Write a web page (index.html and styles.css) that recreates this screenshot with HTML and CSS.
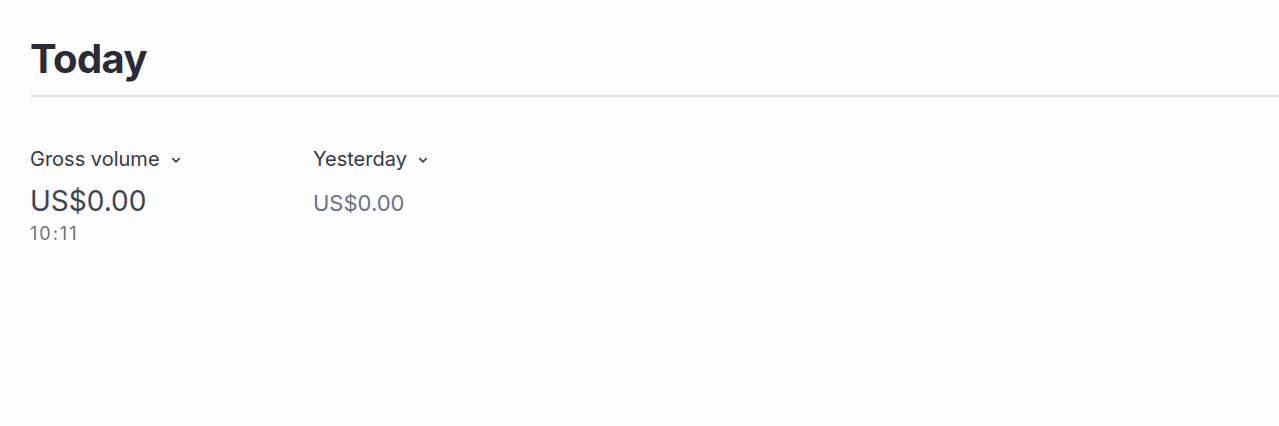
FILE: index.html
```html
<!DOCTYPE html>
<html>
<head>
<meta charset="utf-8">
<link rel="stylesheet" href="styles.css">
</head>
<body>
<main class="page">
  <header class="header">
    <h1 class="title">Today</h1>
  </header>
  <section class="metrics">
    <div class="metric metric-main">
      <button class="metric-label">Gross volume
        <svg class="chev" width="12" height="12" viewBox="0 0 12 12"><path d="M2.8 4.6 L6 7.8 L9.2 4.6" fill="none" stroke="currentColor" stroke-width="1.7" stroke-linecap="round" stroke-linejoin="round"/></svg>
      </button>
      <div class="value">US$0.00</div>
      <div class="time">10:11</div>
    </div>
    <div class="metric metric-compare">
      <button class="metric-label">Yesterday
        <svg class="chev" width="12" height="12" viewBox="0 0 12 12"><path d="M2.8 4.6 L6 7.8 L9.2 4.6" fill="none" stroke="currentColor" stroke-width="1.7" stroke-linecap="round" stroke-linejoin="round"/></svg>
      </button>
      <div class="value value-muted">US$0.00</div>
    </div>
  </section>
</main>
</body>
</html>
```
FILE: styles.css
```css
html, body {
  margin: 0;
  padding: 0;
  background: #fdfdfd;
}
body {
  font-family: Inter, "Noto Sans", "Liberation Sans", sans-serif;
  color: #30313d;
}
.page {
  padding: 33px 0 0 30px;
}
.header {
  border-bottom: 2px solid #e3e3e6;
  padding-bottom: 10px;
}
.title {
  margin: 0;
  font-size: 40px;
  line-height: 52px;
  font-weight: 700;
  color: #2a2b36;
  letter-spacing: -0.6px;
}
.metrics {
  display: flex;
  padding-top: 50px;
}
.metric-main {
  width: 283px;
}
.metric-label {
  display: flex;
  align-items: center;
  gap: 10px;
  padding: 0;
  border: 0;
  background: none;
  font: inherit;
  font-size: 20px;
  line-height: 24px;
  color: #353a44;
}
.chev {
  color: #414552;
  margin-top: 1px;
}
.value {
  margin-top: 14px;
  font-size: 28px;
  line-height: 32px;
  color: #414552;
}
.value-muted {
  font-size: 22px;
  color: #687385;
  margin-top: 16px;
}
.time {
  margin-top: 6px;
  font-size: 18px;
  line-height: 22px;
  color: #6c7281;
  letter-spacing: 2px;
}
```
